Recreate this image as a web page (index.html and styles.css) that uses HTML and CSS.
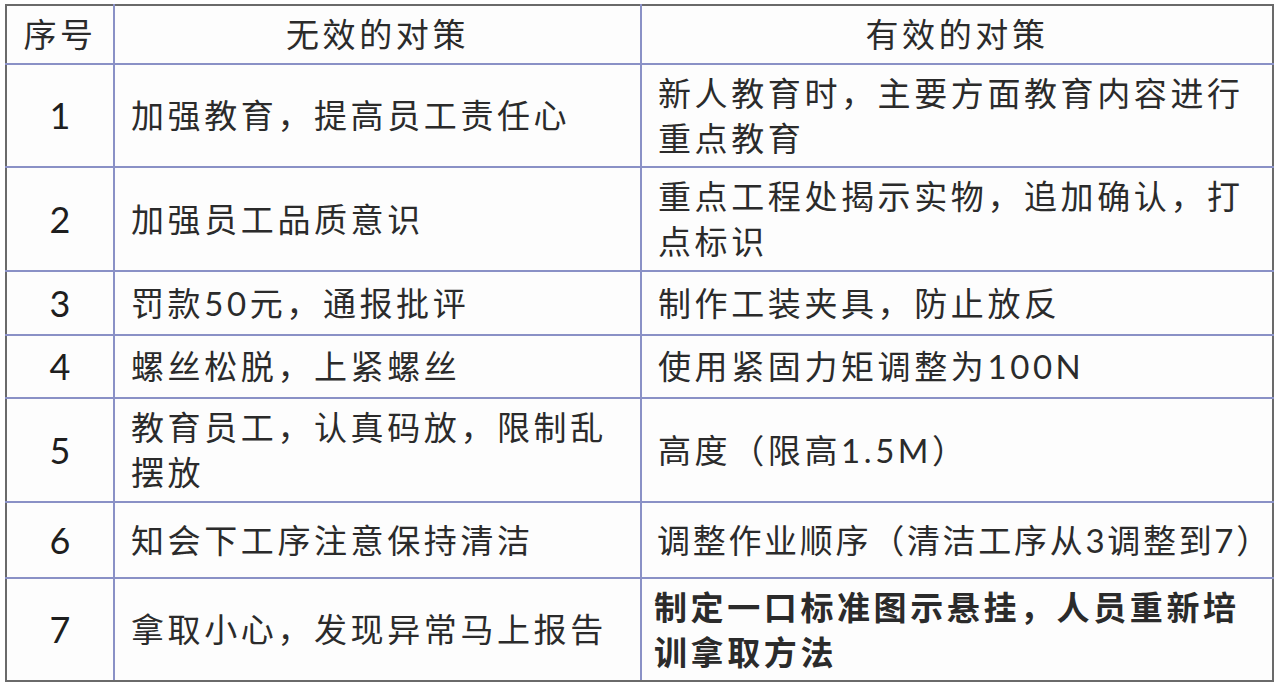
FILE: index.html
```html
<!DOCTYPE html>
<html lang="zh-CN">
<head>
<meta charset="utf-8">
<title>对策对照表</title>
<link rel="stylesheet" href="styles.css">
</head>
<body>
<div class="page">
  <table class="measures">
    <colgroup>
      <col class="c-no">
      <col class="c-bad">
      <col class="c-good">
    </colgroup>
    <thead>
      <tr class="r-head">
        <th>序号</th>
        <th>无效的对策</th>
        <th>有效的对策</th>
      </tr>
    </thead>
    <tbody>
      <tr class="r-tall">
        <td class="no">1</td>
        <td>加强教育，提高员工责任心</td>
        <td>新人教育时，主要方面教育内容进行<br>重点教育</td>
      </tr>
      <tr class="r-tall2">
        <td class="no">2</td>
        <td>加强员工品质意识</td>
        <td>重点工程处揭示实物，追加确认，打<br>点标识</td>
      </tr>
      <tr class="r-short">
        <td class="no">3</td>
        <td>罚款50元，通报批评</td>
        <td>制作工装夹具，防止放反</td>
      </tr>
      <tr class="r-short2">
        <td class="no">4</td>
        <td>螺丝松脱，上紧螺丝</td>
        <td>使用紧固力矩调整为100N</td>
      </tr>
      <tr class="r-tall2">
        <td class="no">5</td>
        <td>教育员工，认真码放，限制乱<br>摆放</td>
        <td>高度（限高1.5M）</td>
      </tr>
      <tr class="r-mid">
        <td class="no">6</td>
        <td>知会下工序注意保持清洁</td>
        <td class="tight">调整作业顺序（清洁工序从3调整到7）</td>
      </tr>
      <tr class="r-tall">
        <td class="no">7</td>
        <td>拿取小心，发现异常马上报告</td>
        <td class="bold">制定一口标准图示悬挂，人员重新培<br>训拿取方法</td>
      </tr>
    </tbody>
  </table>
</div>
</body>
</html>
```
FILE: styles.css
```css
html, body {
  margin: 0;
  padding: 0;
  background: #ffffff;
}

.page {
  padding: 4px 0 0 5px;
}

.measures {
  border-collapse: collapse;
  table-layout: fixed;
  width: 1267px;
  background: #fdfdfd;
  border: 2px solid #6a6a6a;
  font-family: "Lato", "Noto Sans CJK SC", "Microsoft YaHei", sans-serif;
  font-size: 33px;
  color: #2b2b2b;
}

.c-no { width: 108px; }
.c-bad { width: 527px; }
.c-good { width: 632px; }

.measures th,
.measures td {
  border: 2px solid #8a91c6;
  padding: 0 0 0 16px;
  text-align: left;
  vertical-align: middle;
  letter-spacing: 3.6px;
  line-height: 45px;
  white-space: nowrap;
}

.measures th {
  font-weight: 400;
  text-align: center;
  padding: 0;
  border-top-color: #6a6a6a;
}

.measures tr > :first-child {
  border-left-color: #6a6a6a;
}

.measures tr > :last-child {
  border-right-color: #6a6a6a;
}

.measures tbody tr:last-child td {
  border-bottom-color: #6a6a6a;
}

.measures td.no {
  text-align: center;
  padding: 0;
  letter-spacing: 0;
  font-size: 36px;
  color: #1e1e1e;
}

.measures td.tight {
  padding-left: 15px;
  letter-spacing: 2.7px;
}

.measures td.bold {
  font-weight: 700;
  padding-left: 12px;
  letter-spacing: 3.6px;
}

.r-head { height: 59px; }
.r-tall { height: 103px; }
.r-tall2 { height: 104px; }
.r-short { height: 64px; }
.r-short2 { height: 63px; }
.r-mid { height: 76px; }
```
